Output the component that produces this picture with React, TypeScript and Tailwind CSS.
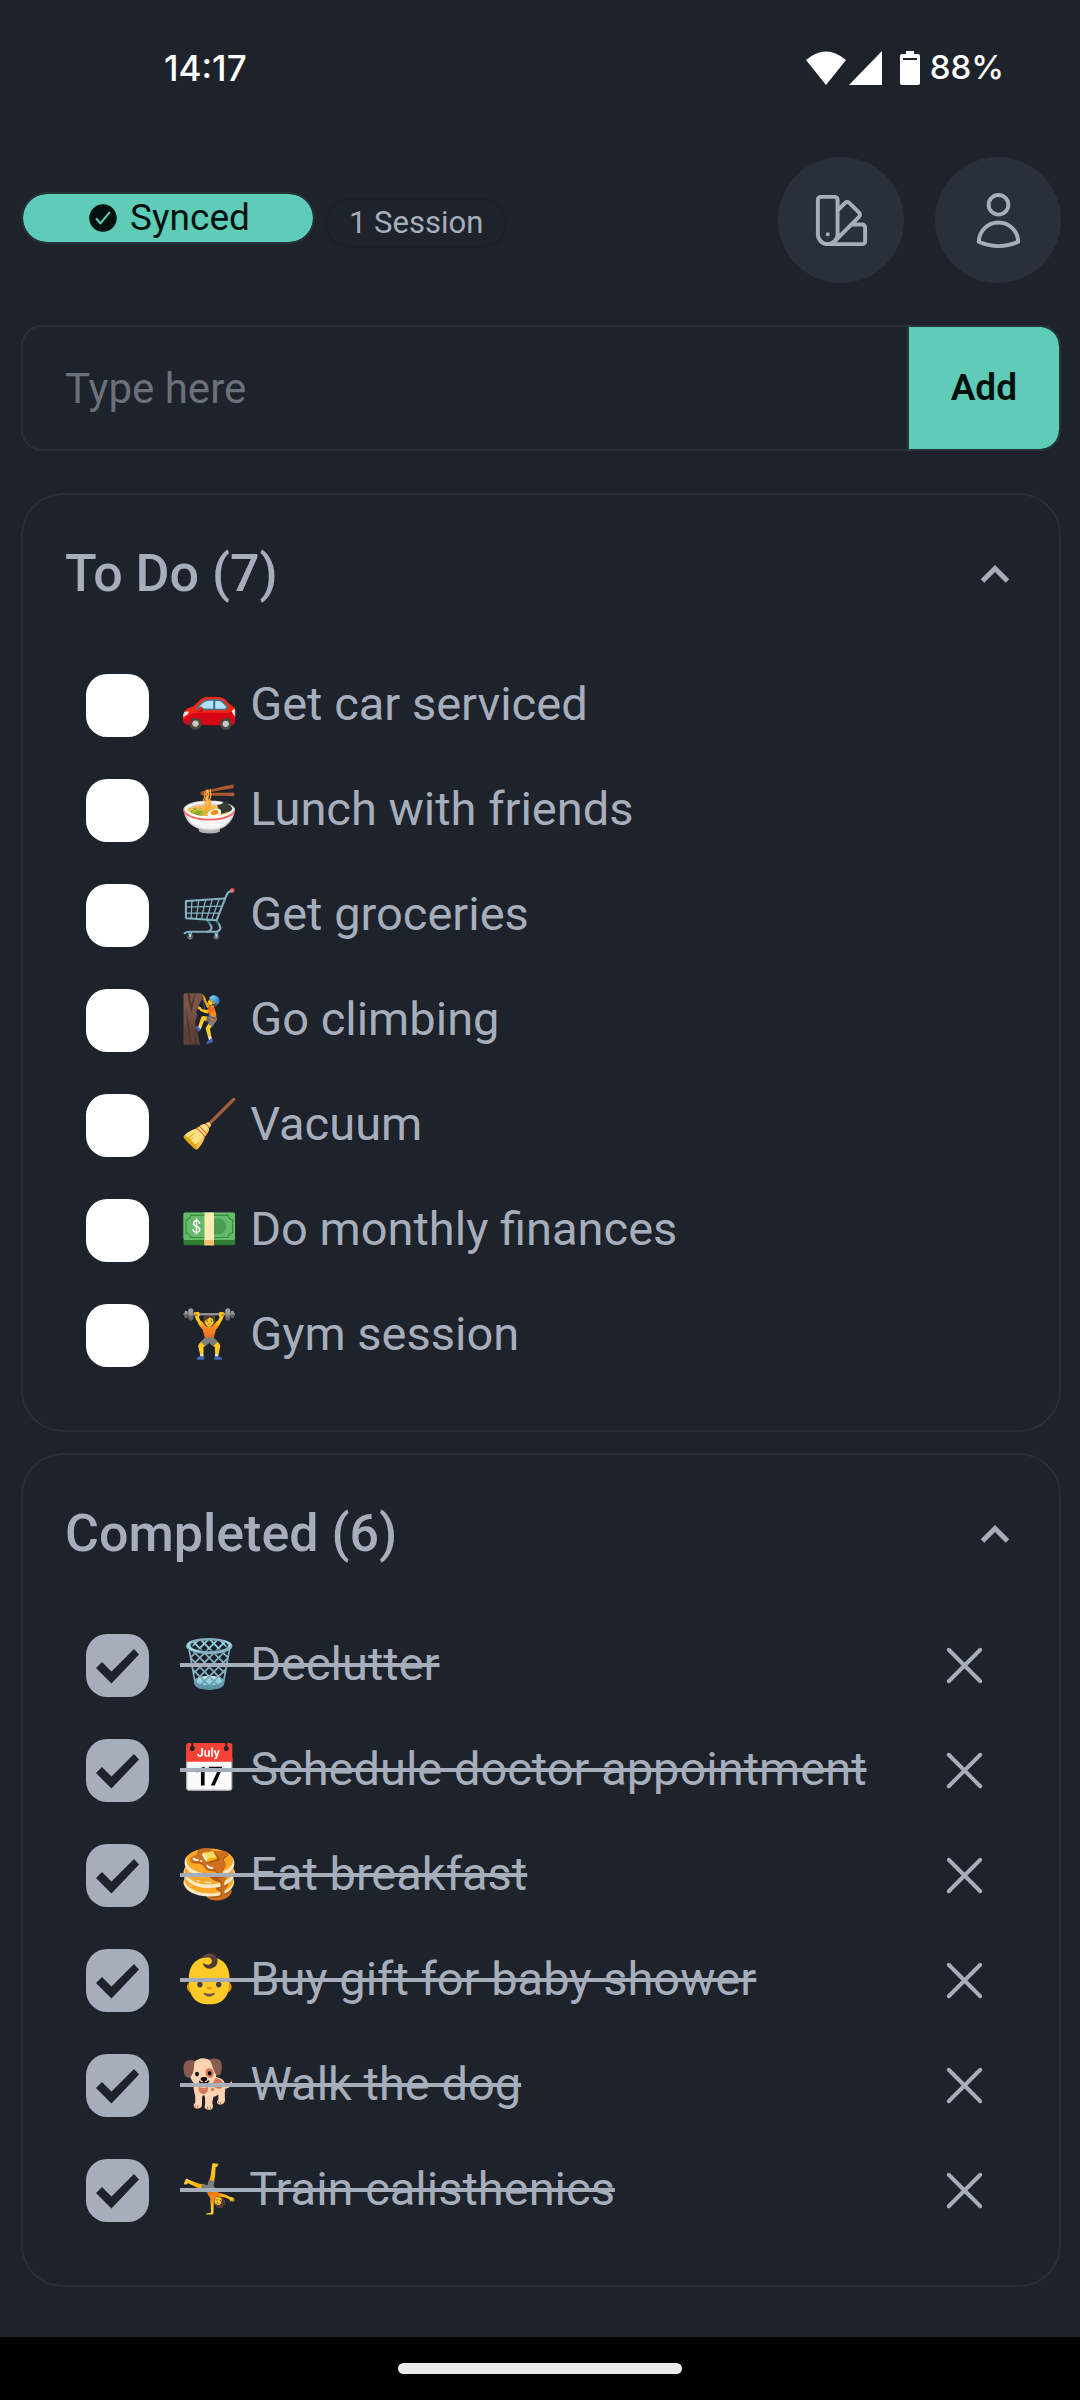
import { useState } from "react";
import type { FormEvent } from "react";
import { HiOutlineSwatch, HiOutlineUser, HiOutlineXMark } from "react-icons/hi2";
import { IoCheckmarkCircle } from "react-icons/io5";

type Task = { id: number; text: string; done: boolean };

const initialTasks: Task[] = [
  { id: 1, text: "🚗 Get car serviced", done: false },
  { id: 2, text: "🍜 Lunch with friends", done: false },
  { id: 3, text: "🛒 Get groceries", done: false },
  { id: 4, text: "🧗 Go climbing", done: false },
  { id: 5, text: "🧹 Vacuum", done: false },
  { id: 6, text: "💵 Do monthly finances", done: false },
  { id: 7, text: "🏋️ Gym session", done: false },
  { id: 8, text: "🗑️ Declutter", done: true },
  { id: 9, text: "📅 Schedule doctor appointment", done: true },
  { id: 10, text: "🥞 Eat breakfast", done: true },
  { id: 11, text: "👶 Buy gift for baby shower", done: true },
  { id: 12, text: "🐕 Walk the dog", done: true },
  { id: 13, text: "🤸 Train calisthenics", done: true },
];

function StatusBar() {
  return (
    <div className="flex h-[136px] items-center justify-between pr-[76px] pl-[164px] font-['Inter'] text-[35px] font-medium text-white">
      <span>14:17</span>
      <div className="flex items-center">
        <svg className="h-[34px] w-[40px]" viewBox="0 0 40 34" fill="currentColor" aria-hidden="true">
          <path d="M0 9Q20 -8 40 9L20 34Z" />
        </svg>
        <svg className="ml-[3px] h-[34px] w-[33px]" viewBox="0 0 33 34" fill="currentColor" aria-hidden="true">
          <path d="M33 0V34H0Z" />
        </svg>
        <svg className="ml-[18px] h-[34px] w-[20px]" viewBox="0 0 20 34" aria-hidden="true">
          <path d="M6 0H14V3H18Q20 3 20 5V32Q20 34 18 34H2Q0 34 0 32V5Q0 3 2 3H6Z" fill="currentColor" />
          <path d="M3 7H17V9H3Z" fill="#1e222a" />
        </svg>
        <span className="ml-[10px] text-[33px]">88%</span>
      </div>
    </div>
  );
}

function Header() {
  return (
    <header className="flex items-center justify-between py-[21px] pr-[19px] pl-[21px]">
      <div className="flex items-start gap-[10px]">
        <div className="flex h-[52px] w-[294px] items-center justify-center gap-[10px] rounded-full border-2 border-[#243238] bg-[#5eccb8] bg-clip-padding text-[37px] text-[#00110d]">
          <IoCheckmarkCircle className="size-[34px]" aria-hidden="true" />
          Synced
        </div>
        <div className="mt-[6px] flex h-[50px] items-center rounded-full border-2 border-[#1b2025] px-[22px] text-[31px]">
          1 Session
        </div>
      </div>
      <div className="flex gap-[31px]">
        <button type="button" aria-label="Change theme" className="grid size-[126px] place-items-center rounded-full bg-[#2a303a]">
          <HiOutlineSwatch className="size-[63px]" />
        </button>
        <button type="button" aria-label="Account" className="grid size-[126px] place-items-center rounded-full bg-[#2a303a]">
          <HiOutlineUser className="size-[63px]" />
        </button>
      </div>
    </header>
  );
}

function TaskRow({ task, onToggle, onRemove }: { task: Task; onToggle: () => void; onRemove: () => void }) {
  return (
    <li className="flex h-[105px] items-center justify-between">
      <label className="flex items-center gap-[31px]">
        <span className="grid size-[63px] shrink-0">
          <input
            type="checkbox"
            checked={task.done}
            onChange={onToggle}
            className="col-start-1 row-start-1 size-[63px] appearance-none rounded-[21px] bg-white checked:bg-[#a6adbb]"
          />
          {task.done && (
            <svg className="pointer-events-none col-start-1 row-start-1 size-[63px]" viewBox="0 0 63 63" aria-hidden="true">
              <path d="M10 34L16 28L25.500 37.500L48 15L53 20.500L25.500 49.500Z" fill="#1e222a" />
            </svg>
          )}
        </span>
        <span className={task.done ? "pb-1 text-[47px] leading-[63px] line-through" : "pb-1 text-[47px] leading-[63px]"}>
          {task.text}
        </span>
      </label>
      {task.done && (
        <button type="button" aria-label={"Delete " + task.text} onClick={onRemove}>
          <HiOutlineXMark className="size-[63px]" />
        </button>
      )}
    </li>
  );
}

function TaskCard({
  title,
  tasks,
  onToggle,
  onRemove,
}: {
  title: string;
  tasks: Task[];
  onToggle: (id: number) => void;
  onRemove: (id: number) => void;
}) {
  const [open, setOpen] = useState(true);
  return (
    <section className="rounded-[42px] border-2 border-[#2a2f37]">
      <h2>
        <button
          type="button"
          aria-expanded={open}
          onClick={() => setOpen(!open)}
          className="flex h-[158px] w-full items-center justify-between pr-[48px] pl-[42px] text-left text-[52px] font-medium"
        >
          {title} ({tasks.length})
          <svg
            className={open ? "h-[20px] w-[32px]" : "h-[20px] w-[32px] rotate-180"}
            viewBox="0 0 32 20"
            fill="none"
            stroke="currentColor"
            strokeWidth="5"
            aria-hidden="true"
          >
            <path d="M3.500 17L16 4.500L28.500 17" />
          </svg>
        </button>
      </h2>
      {open && (
        <ul className="pr-[63px] pb-[42px] pl-[63px]">
          {tasks.map((task) => (
            <TaskRow key={task.id} task={task} onToggle={() => onToggle(task.id)} onRemove={() => onRemove(task.id)} />
          ))}
        </ul>
      )}
    </section>
  );
}

export default function App() {
  const [tasks, setTasks] = useState(initialTasks);
  const [draft, setDraft] = useState("");

  const toggle = (id: number) => setTasks(tasks.map((t) => (t.id === id ? { ...t, done: !t.done } : t)));
  const remove = (id: number) => setTasks(tasks.filter((t) => t.id !== id));
  const add = (event: FormEvent) => {
    event.preventDefault();
    if (!draft.trim()) return;
    setTasks([...tasks, { id: Date.now(), text: draft.trim(), done: false }]);
    setDraft("");
  };

  return (
    <div className="flex min-h-screen flex-col bg-[#1e222a] font-['Roboto','Noto_Color_Emoji',sans-serif] text-[#a6adbb]">
      <StatusBar />
      <Header />
      <main className="flex flex-col gap-[21px] pt-[21px] pr-[19px] pb-[50px] pl-[21px]">
        <form onSubmit={add} className="mb-[21px] flex h-[126px]">
          <input
            type="text"
            aria-label="New task"
            placeholder="Type here"
            value={draft}
            onChange={(event) => setDraft(event.target.value)}
            className="min-w-0 flex-1 rounded-l-[21px] border-2 border-r-0 border-[#2a2f37] bg-transparent px-[42px] text-[42px] outline-none placeholder:text-[#6b707b]"
          />
          <button
            type="submit"
            className="rounded-r-[21px] border-2 border-[#24383c] bg-[#5eccb8] bg-clip-padding px-[42px] text-[37px] font-semibold text-[#00110d]"
          >
            Add
          </button>
        </form>
        <TaskCard title="To Do" tasks={tasks.filter((t) => !t.done)} onToggle={toggle} onRemove={remove} />
        <TaskCard title="Completed" tasks={tasks.filter((t) => t.done)} onToggle={toggle} onRemove={remove} />
      </main>
      <footer className="mt-auto flex h-[63px] items-center justify-center bg-black">
        <div className="h-[11px] w-[284px] rounded-full bg-[#ebebeb]" />
      </footer>
    </div>
  );
}
